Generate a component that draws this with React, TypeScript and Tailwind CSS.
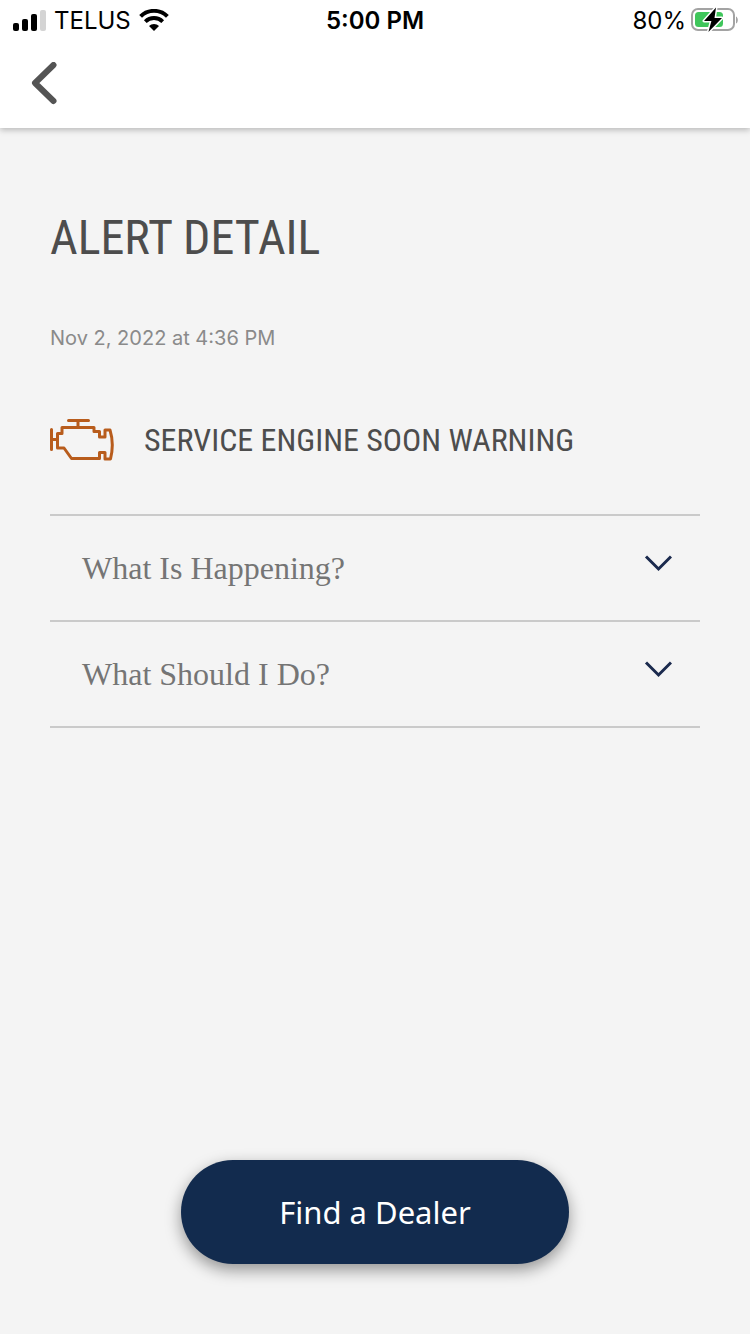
import { useState } from "react";

const SECTIONS = ["What Is Happening?", "What Should I Do?"];

function cn(...s: Array<string | false | null | undefined>) {
  return s.filter(Boolean).join(" ");
}

function SignalIcon() {
  return (
    <svg width="34" height="24" viewBox="0 0 34 24" aria-hidden="true">
      <rect x="1" y="14" width="6" height="8" rx="2" fill="#000" />
      <rect x="10" y="10" width="6" height="12" rx="2" fill="#000" />
      <rect x="19" y="5" width="6" height="17" rx="2" fill="#000" />
      <rect x="28" y="1" width="6" height="21" rx="2" fill="#d4d4d4" />
    </svg>
  );
}

function WifiIcon() {
  return (
    <svg width="30" height="24" viewBox="0 0 30 24" fill="none" stroke="#000" aria-hidden="true">
      <path d="M1.6 7.4a19 19 0 0 1 26.8 0" strokeWidth="4" />
      <path d="M6.3 12.6a12.3 12.3 0 0 1 17.4 0" strokeWidth="3.8" />
      <path d="M15 22l-5-5a7.1 7.1 0 0 1 10 0z" fill="#000" stroke="none" />
    </svg>
  );
}

function BatteryIcon() {
  return (
    <svg width="48" height="28" viewBox="0 0 48 28" aria-hidden="true">
      <rect x="2" y="2" width="42" height="21" rx="6" fill="#fff" stroke="#a3a3a3" strokeWidth="2" />
      <path d="M46 9.5c2.4 1 2.4 6 0 7z" fill="#a3a3a3" />
      <rect x="5" y="5" width="28" height="15" rx="3.5" fill="#3fc65b" />
      <path
        d="M26 .5L14 14h7.4l-3 11L32 11h-7.5z"
        fill="#000"
        stroke="#fff"
        strokeWidth="3"
        strokeLinejoin="round"
        paintOrder="stroke"
      />
    </svg>
  );
}

function EngineIcon() {
  return (
    <svg
      width="64"
      height="44"
      viewBox="0 0 64 44"
      fill="none"
      stroke="#b85c1c"
      strokeWidth="3"
      strokeLinecap="round"
      strokeLinejoin="round"
      aria-hidden="true"
    >
      <path d="M18.5 2.5h20M28 2.5V9M1.5 11.5v20M1.5 21.5H7" />
      <path d="M7.5 30V15.500h4.500V9.500h32v4h5.500v5.500h5.500v-7h5c2.800 9 2.800 20 .5 29h-5.500v-6.500h-5.500v6H21.500L14 30z" />
    </svg>
  );
}

export default function AlertDetail() {
  const [open, setOpen] = useState<string | null>(null);

  return (
    <div className="flex min-h-screen flex-col bg-[#f4f4f4] text-[#4d4d4d]">
      <header className="bg-white shadow-[0_2px_6px_rgba(0,0,0,0.25)]">
        {/* status bar */}
        <div className="grid h-10 grid-cols-3 items-center px-3 pt-0.5 font-['Inter',sans-serif] text-2xl text-black">
          <div className="flex items-center gap-2">
            <SignalIcon />
            <span>TELUS</span>
            <WifiIcon />
          </div>
          <span className="text-center font-semibold">5:00 PM</span>
          <div className="flex items-center justify-end gap-1">
            <span>80%</span>
            <BatteryIcon />
          </div>
        </div>

        <nav className="flex h-22 items-center px-6">
          <button type="button" aria-label="Back" className="flex p-1">
            <svg width="32" height="44" viewBox="0 0 32 44" fill="none" aria-hidden="true">
              <path
                d="M25.5 3L7 21l18.500 18"
                stroke="#545454"
                strokeWidth="6"
                strokeLinecap="round"
                strokeLinejoin="round"
              />
            </svg>
          </button>
        </nav>
      </header>

      <main className="flex flex-1 flex-col px-[50px] pt-20 pb-[70px]">
        <h1 className="font-['Roboto_Condensed','Roboto',sans-serif] text-5xl leading-15 font-normal">
          ALERT DETAIL
        </h1>
        <p className="mt-[54px] font-['Inter',sans-serif] text-xl leading-8 text-[#8a8a8a]">
          Nov 2, 2022 at 4:36 PM
        </p>

        <div className="mt-16 flex items-center gap-[30px]">
          <EngineIcon />
          <h2 className="font-['Roboto_Condensed','Roboto',sans-serif] text-[32px] leading-11">
            SERVICE ENGINE SOON WARNING
          </h2>
        </div>

        <ul className="mt-[52px] border-t-2 border-[#cacaca]">
          {SECTIONS.map((title) => (
            <li key={title} className="border-b-2 border-[#cacaca]">
              <button
                type="button"
                aria-expanded={open === title}
                onClick={() => setOpen(open === title ? null : title)}
                className="flex h-[104px] w-full items-center justify-between pr-7 pl-8 text-left"
              >
                <span className="font-['Liberation_Serif',serif] text-[32px] leading-10 text-[#757575]">
                  {title}
                </span>
                <svg
                  width="28"
                  height="28"
                  viewBox="0 0 28 28"
                  fill="none"
                  className={cn("transition-transform", open === title && "rotate-180")}
                  aria-hidden="true"
                >
                  <path d="M2 2.500l12.500 12.500L27 2.500" stroke="#1b2a4e" strokeWidth="3" />
                </svg>
              </button>
            </li>
          ))}
        </ul>

        <button
          type="button"
          className="mt-auto self-center rounded-full bg-[#122b4e] px-[98px] py-8 font-['Noto_Sans',sans-serif] text-[31px] leading-10 text-white shadow-[0_6px_16px_rgba(0,0,0,0.4)]"
        >
          Find a Dealer
        </button>
      </main>
    </div>
  );
}
